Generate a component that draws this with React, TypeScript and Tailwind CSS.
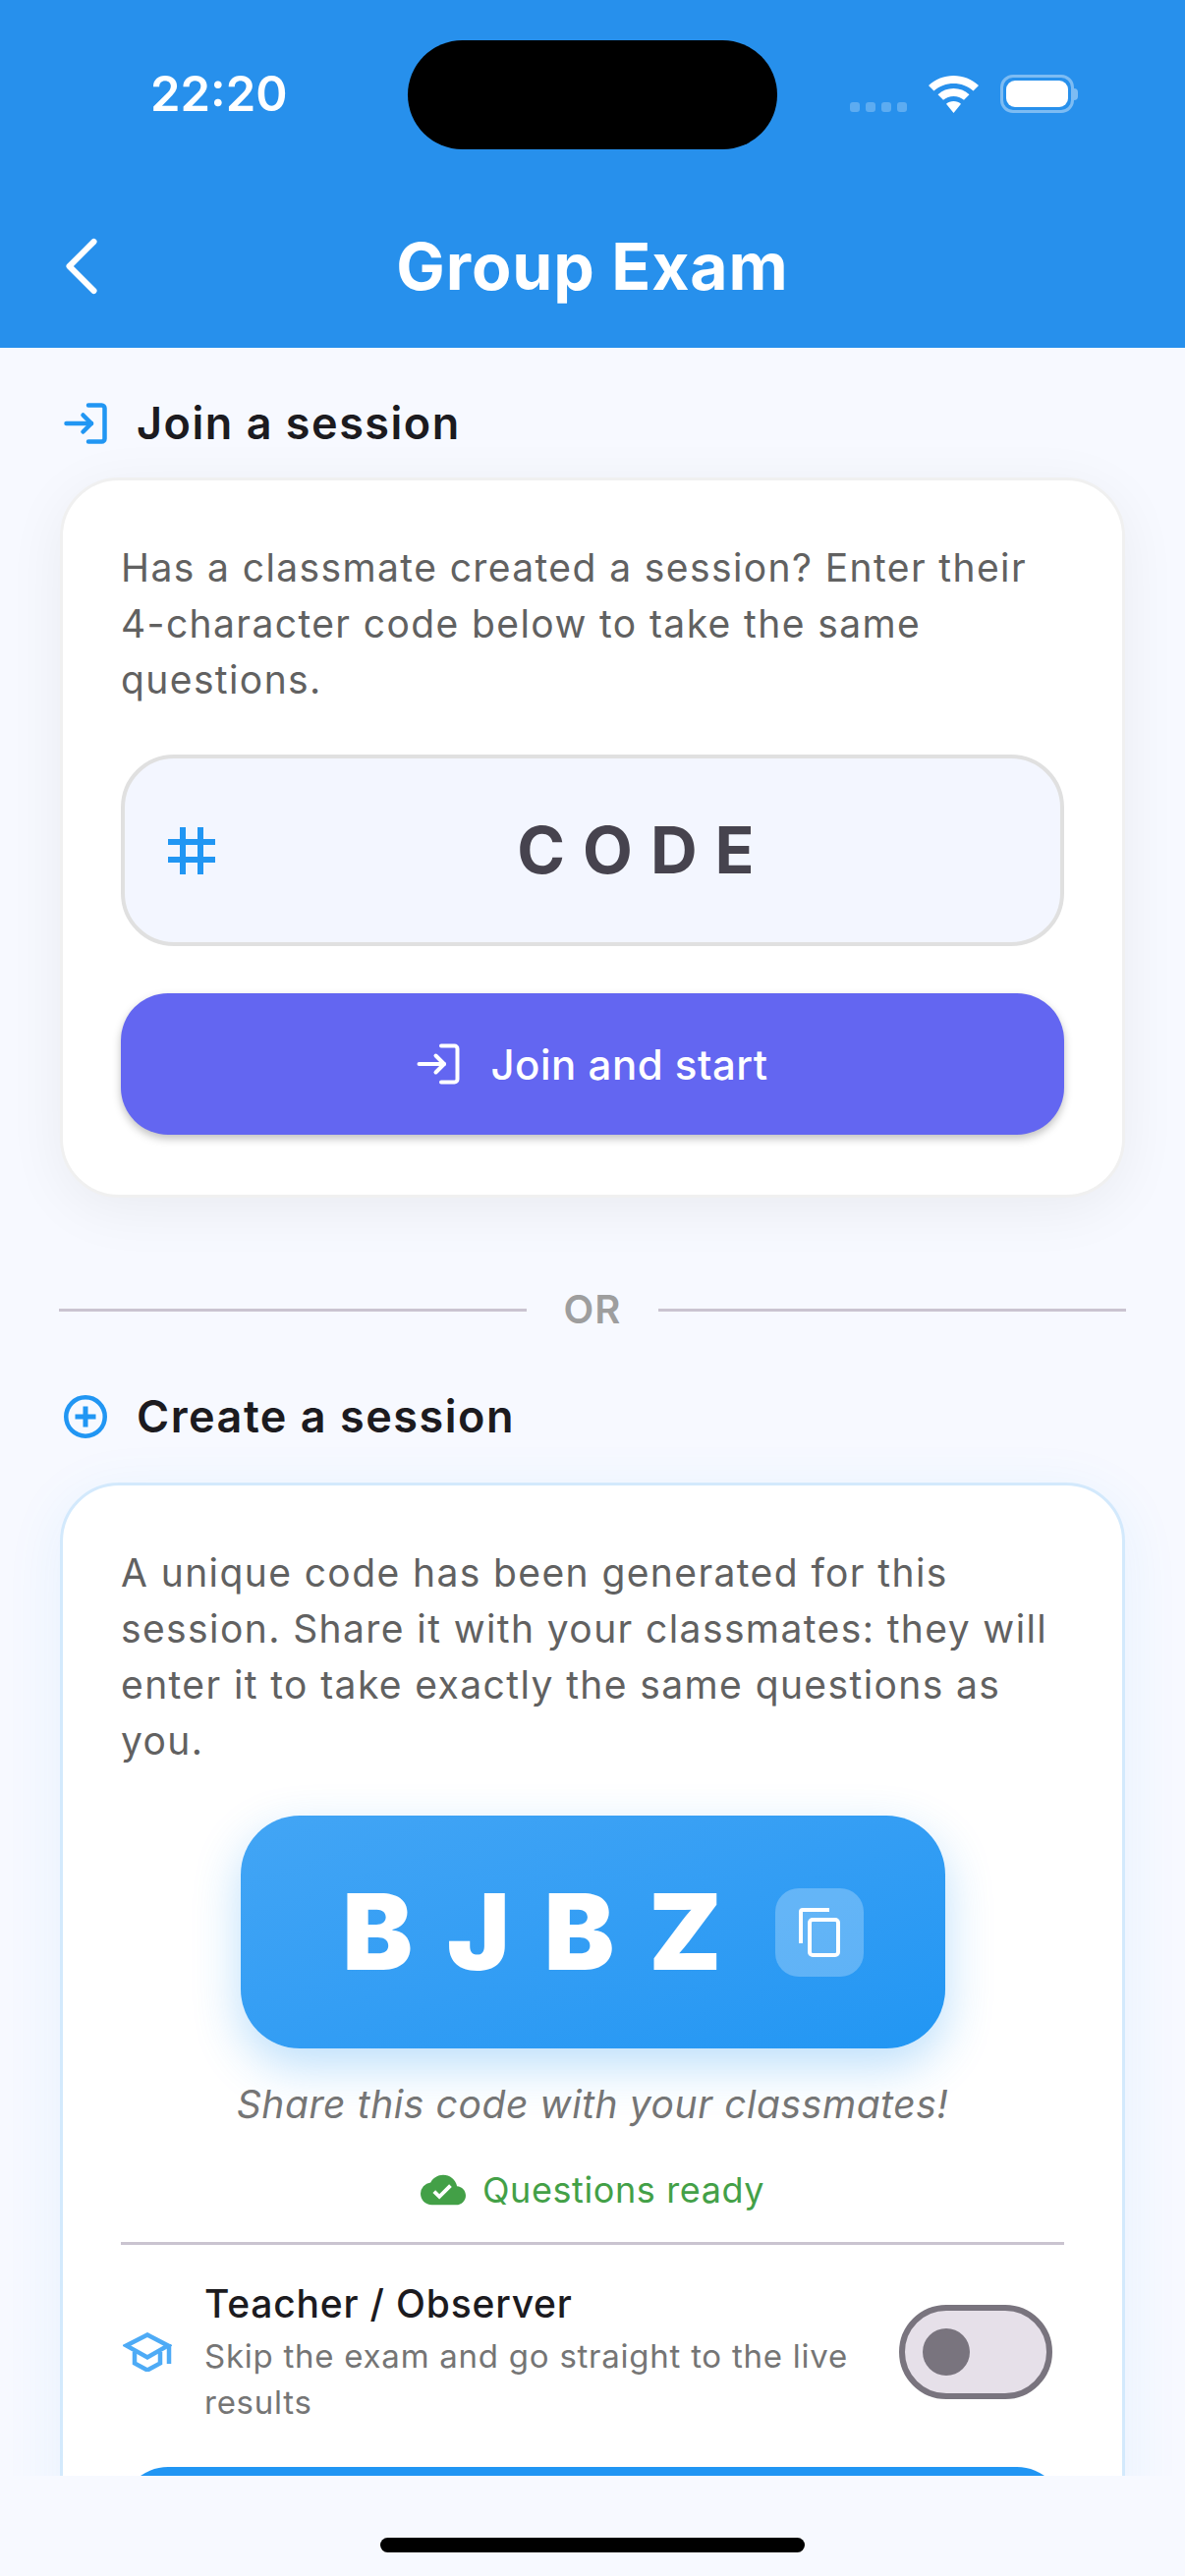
import { ChevronLeft } from "lucide-react";
import { MdCloudDone } from "react-icons/md";

const StatusBar = () => (
  <div className="flex h-[152px] items-start">
    <span className="ml-[153px] mt-[62px] w-[140px] text-[49px] leading-[68px] font-semibold text-white">22:20</span>
    <div className="ml-[122px] mt-[41px] h-[111px] w-[376px] rounded-[56px] bg-black" />
    <div className="ml-[74px] mt-[76px] flex items-end">
      <div className="mb-[1px] flex gap-[6px]">
        <span className="h-[10px] w-[10px] rounded-[3px] bg-white/25" />
        <span className="h-[10px] w-[10px] rounded-[3px] bg-white/25" />
        <span className="h-[10px] w-[10px] rounded-[3px] bg-white/25" />
        <span className="h-[10px] w-[10px] rounded-[3px] bg-white/25" />
      </div>
      <svg className="ml-[22px] h-[38px] w-[51px]" viewBox="0 0 51 38" fill="white">
        <path d="M25.5 0C35 0 44 3.6 51 10l-5.5 5.6C40 10.600 33 8 25.500 8S11 10.600 5.500 15.600L0 10C7 3.600 16 0 25.500 0z" />
        <path d="M25.500 13c6 0 11.600 2.200 16 6.200l-5.500 5.600c-2.900-2.500-6.600-3.800-10.500-3.800s-7.600 1.300-10.500 3.800l-5.500-5.600c4.400-4 10-6.200 16-6.200z" />
        <path d="M25.500 26c2.900 0 5.500 1 7.500 2.800L25.500 38 18 28.800c2-1.800 4.600-2.800 7.500-2.800z" />
      </svg>
      <div className="ml-[22px] flex h-[39px] w-[75px] items-center justify-center rounded-[13px] border-[3px] border-white/40">
        <div className="h-[27px] w-[63px] rounded-[9px] bg-white" />
      </div>
      <div className="mb-[13px] h-[12px] w-[4px] rounded-r-full bg-white/40" />
    </div>
  </div>
);

const LoginIcon = ({ className, stroke }: { className: string; stroke: number }) => (
  <svg className={className} width="44" height="42" viewBox="0 0 44 42" fill="none" stroke="currentColor" strokeWidth={stroke} strokeLinecap="round" strokeLinejoin="round">
    <path d="M25 2.500h13.500a3 3 0 0 1 3 3v31a3 3 0 0 1-3 3H25" />
    <path d="M2.500 21H28" />
    <path d="M19.500 12.500L28 21l-8.500 8.500" />
  </svg>
);

const PlusIcon = () => (
  <svg className="text-[#2196f3]" width="44" height="44" viewBox="0 0 44 44" fill="none" stroke="currentColor">
    <circle cx="22" cy="22" r="19.750" strokeWidth="4.500" />
    <path d="M22 11.500v21M11.500 22h21" strokeWidth="5" />
  </svg>
);

const HashIcon = () => (
  <svg className="shrink-0 text-[#2196f3]" width="48" height="48" viewBox="0 0 48 48" fill="currentColor">
    <rect x="12" y="0" width="6" height="48" />
    <rect x="30" y="0" width="6" height="48" />
    <rect x="0" y="12" width="48" height="6" />
    <rect x="0" y="30" width="48" height="6" />
  </svg>
);

const CopyIcon = () => (
  <svg className="text-white" width="42" height="50" viewBox="0 0 42 50" fill="none" stroke="currentColor" strokeWidth="4">
    <path d="M31 2H4a2 2 0 0 0-2 2v32" />
    <rect x="11" y="12" width="29" height="36" rx="3" />
  </svg>
);

const SchoolIcon = () => (
  <svg className="shrink-0 text-[#4eabf6]" width="50" height="40" viewBox="0 0 50 40" fill="none" stroke="currentColor" strokeWidth="4.500">
    <path d="M25 2.500L46 13.500 25 25.500 3.500 13.500z" />
    <path d="M47 12v20" />
    <path d="M12 20v11.500l13 7 13-7V20" />
  </svg>
);

const SectionTitle = ({ icon, title }: { icon: React.ReactNode; title: string }) => (
  <div className="flex h-[60px] items-center gap-[30px] pl-[65px]">
    {icon}
    <span className="text-[45px] font-semibold tracking-[1.5px] text-[#1c1b1f]">{title}</span>
  </div>
);

const App = () => {
  return (
    <div className="flex h-[2622px] w-[1206px] flex-col overflow-hidden bg-[#f7f9ff] font-['Inter',sans-serif]">
      <div className="h-[354px] shrink-0 bg-[#2790ec]">
        <StatusBar />
        <div className="mt-[46px] grid h-[146px] grid-cols-[1fr_auto_1fr] items-center">
          <ChevronLeft className="ml-[33px]" size={100} color="white" strokeWidth={1.45} />
          <span className="text-[66px] font-bold tracking-[0.9px] text-white">Group Exam</span>
          <div />
        </div>
      </div>

      <div className="h-[2166px] shrink-0 overflow-hidden pt-[47px]">
        <SectionTitle icon={<LoginIcon className="text-[#2196f3]" stroke={4.5} />} title="Join a session" />

        <div className="mx-[61px] mt-[25px] rounded-[60px] border-[3px] border-[#f0f0f0] bg-white px-[59px] pt-[60px] pb-[61px] shadow-[0_12px_60px_rgba(0,0,0,0.06)]">
          <p className="text-[39px] leading-[57px] tracking-[1.4px] text-[#616161]">
            Has a classmate created a session? Enter their 4-character code below to take the same questions.
          </p>
          <div className="mt-[48px] flex h-[195px] items-center rounded-[54px] border-[4.5px] border-[#e0e0e0] bg-[#f3f6ff] pl-[44px]">
            <HashIcon />
            <span className="flex-1 pl-[14px] text-center text-[66px] font-bold tracking-[18px] text-[#46434e]">CODE</span>
          </div>
          <button className="mt-[48px] flex h-[144px] w-full items-center justify-center gap-[31px] rounded-[48px] bg-[#6366f1] text-[42px] font-medium tracking-[0.5px] text-white shadow-[0_4px_8px_rgba(0,0,0,0.25)]">
            <LoginIcon className="" stroke={4} />
            Join and start
          </button>
        </div>

        <div className="mx-[60px] mt-[84px] flex items-center gap-[38px]">
          <div className="h-[3px] flex-1 bg-[#cac4d0]" />
          <span className="text-[40px] font-semibold tracking-[1px] text-[#9e9e9e]">OR</span>
          <div className="h-[3px] flex-1 bg-[#cac4d0]" />
        </div>

        <div className="mt-[49px]">
          <SectionTitle icon={<PlusIcon />} title="Create a session" />
        </div>

        <div className="mx-[61px] mt-[37px] rounded-[60px] border-[3px] border-[#d3e9fc] bg-white px-[59px] pt-[60px] pb-[60px] shadow-[0_12px_60px_rgba(33,150,243,0.08)]">
          <p className="text-[39px] leading-[57px] tracking-[1.4px] text-[#616161]">
            A unique code has been generated for this session. Share it with your classmates: they will enter it to take exactly the same questions as you.
          </p>
          <div className="mx-auto mt-[48px] flex h-[237px] w-[717px] items-center rounded-[60px] bg-gradient-to-br from-[#42a5f5] to-[#2196f3] pl-[104px] shadow-[0_18px_48px_rgba(33,150,243,0.3)]">
            <span className="w-[440px] text-[107px] font-black tracking-[35px] text-white">BJBZ</span>
            <div className="flex h-[90px] w-[90px] items-center justify-center rounded-[24px] bg-white/25">
              <CopyIcon />
            </div>
          </div>
          <p className="mt-[28px] text-center text-[39px] italic tracking-[0.6px] text-[#757575]">
            Share this code with your classmates!
          </p>
          <div className="mt-[30px] flex items-center justify-center gap-[17px] text-[36px] tracking-[0.6px] text-[#43a047]">
            <MdCloudDone size={46} />
            Questions ready
          </div>
          <div className="mt-[26px] h-[3px] bg-[#cac4d0]" />
          <div className="mt-[35px] flex items-center pl-[2px]">
            <SchoolIcon />
            <div className="ml-[33px] w-[691px]">
              <div className="text-[39px] leading-[50px] font-medium tracking-[0.8px] text-[#1c1b1f]">Teacher / Observer</div>
              <div className="mt-[5px] text-[33px] leading-[47px] tracking-[0.75px] text-[#757575]">
                Skip the exam and go straight to the live results
              </div>
            </div>
            <div className="ml-[16px] flex h-[96px] w-[156px] shrink-0 items-center rounded-full border-[6px] border-[#79747e] bg-[#e6e0e9] pl-[18px]">
              <div className="h-[48px] w-[48px] rounded-full bg-[#79747e]" />
            </div>
          </div>
          <div className="mt-[42px] h-[144px] rounded-[48px] bg-[#2196f3]" />
        </div>
      </div>

      <div className="flex h-[102px] shrink-0 justify-center bg-[#f7f9ff] pt-[63px]">
        <div className="h-[15px] w-[432px] rounded-full bg-black" />
      </div>
    </div>
  );
};

export default App;
